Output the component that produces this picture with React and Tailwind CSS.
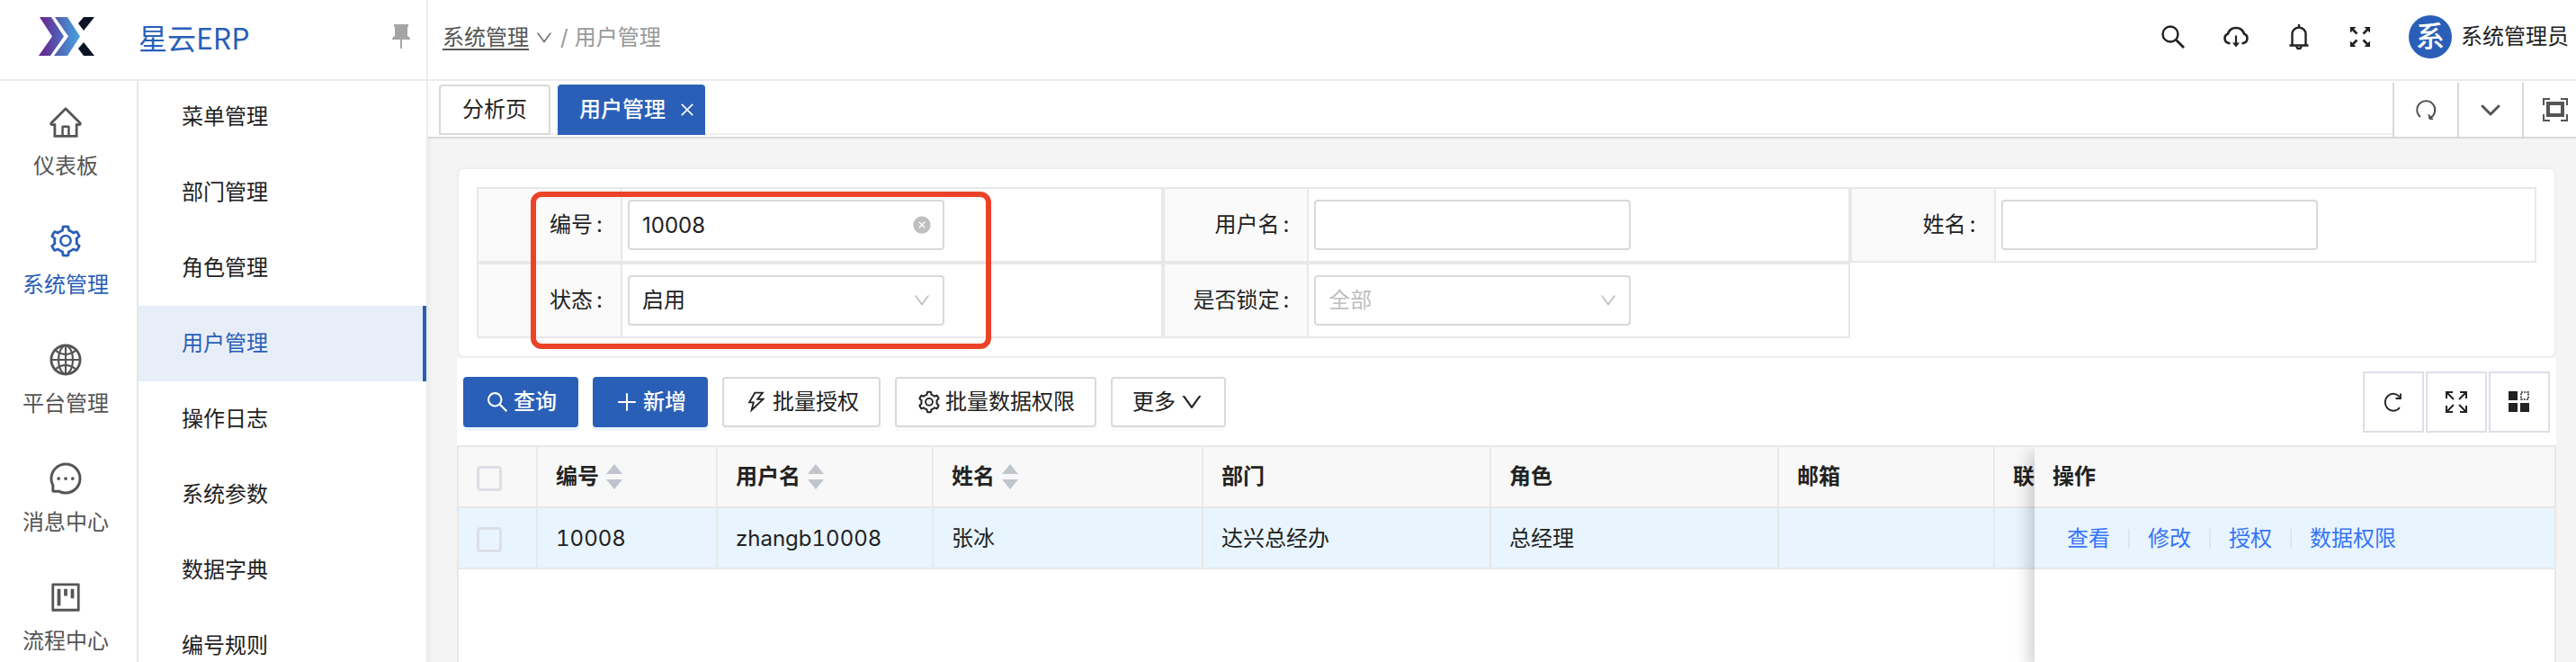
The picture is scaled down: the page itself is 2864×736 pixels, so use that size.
import React from "react";
import { useState } from "react";
import {
    AiOutlineHome, AiOutlineSetting, AiOutlineGlobal, AiOutlineMessage, AiOutlineProject,
    AiOutlineSearch, AiOutlinePlus, AiOutlineThunderbolt, AiOutlineDown, AiOutlineClose, AiFillCloseCircle,
} from "react-icons/ai";

const modules = [
    { name: "仪表板", icon: AiOutlineHome },
    { name: "系统管理", icon: AiOutlineSetting },
    { name: "平台管理", icon: AiOutlineGlobal },
    { name: "消息中心", icon: AiOutlineMessage },
    { name: "流程中心", icon: AiOutlineProject },
];

const menus = ["菜单管理", "部门管理", "角色管理", "用户管理", "操作日志", "系统参数", "数据字典", "编号规则"];

const columns = [
    { title: "编号", width: "w-[200px]", sortable: true },
    { title: "用户名", width: "w-[240px]", sortable: true },
    { title: "姓名", width: "w-[300px]", sortable: true },
    { title: "部门", width: "w-[320px]" },
    { title: "角色", width: "w-[320px]" },
    { title: "邮箱", width: "w-[240px]" },
    { title: "联", width: "w-[240px]" },
];

const rows = [
    { id: 1, cells: ["10008", "zhangb10008", "张冰", "达兴总经办", "总经理", "", ""] },
];

function Logo() {
    return (
        <svg width="64" height="46" viewBox="0 0 64 46">
            <defs>
                <linearGradient id="logoA" x1="0" y1="0" x2="1" y2="0">
                    <stop offset="0" stopColor="#6f1f8a" />
                    <stop offset="1" stopColor="#4a6cc0" />
                </linearGradient>
                <linearGradient id="logoB" x1="0" y1="0" x2="1" y2="0">
                    <stop offset="0" stopColor="#5457b0" />
                    <stop offset="1" stopColor="#46a4de" />
                </linearGradient>
            </defs>
            <path d="M2 1h13l14 21.500L14 44H1l15-21.500z" fill="url(#logoA)" />
            <path d="M19 1h14l14 21.500L33 44H18l16-21.500z" fill="url(#logoB)" />
            <path d="M51 1h12L51 16l-6-8zM51 29l12 15H51l-6-8z" fill="#0b1426" />
        </svg>
    );
}

function PinIcon() {
    return (
        <svg width="20" height="28" viewBox="0 0 20 28" fill="#a5a5a5">
            <path d="M2 0h16v3h-1v10c2 1 3 2 3 4H0c0-2 1-3 3-4V3H2zM9 17h2v10H9z" />
        </svg>
    );
}

function SearchIcon() {
    return (
        <svg width="28" height="28" viewBox="0 0 28 28" fill="none" stroke="currentColor" strokeWidth="2.4">
            <circle cx="11" cy="11" r="8.500" />
            <path d="M17 17l9 9" strokeWidth="2.8" />
        </svg>
    );
}

function CloudIcon() {
    return (
        <svg width="32" height="28" viewBox="0 0 32 28" fill="none" stroke="currentColor" strokeWidth="2.6">
            <path d="M9.500 21H8A5.500 5.500 0 0 1 7 10.500a9.500 9.500 0 0 1 18 0A5.500 5.500 0 0 1 24 21h-1.500" />
            <path d="M16 12.500V22" strokeWidth="2.2" />
            <path d="M12 20.500h8l-4 5z" fill="currentColor" stroke="none" />
        </svg>
    );
}

function BellIcon() {
    return (
        <svg width="28" height="32" viewBox="0 0 28 32" fill="none" stroke="currentColor" strokeWidth="2.4">
            <path d="M6.500 25.500V13a7.500 7.500 0 0 1 15 0v12.500M3.500 25.500h21M14 2v4" />
            <path d="M11.500 26.500a2.500 2.500 0 0 0 5 0" />
        </svg>
    );
}

function ExpandIcon() {
    return (
        <svg width="28" height="28" viewBox="0 0 28 28" fill="currentColor">
            <path d="M3 3h6.500L3 9.500zM25 3v6.500L18.500 3zM3 25v-6.500L9.500 25zM25 25h-6.500l6.500-6.500z" />
            <path d="M5 5l5.500 5.500M23 5l-5.500 5.500M5 23l5.500-5.500M23 23l-5.500-5.500" stroke="currentColor" strokeWidth="2.6" />
        </svg>
    );
}

function ReloadIcon() {
    return (
        <svg width="28" height="28" viewBox="0 0 28 28" fill="none" stroke="currentColor" strokeWidth="2">
            <path d="M8 22a10 10 0 1 1 11 1" />
            <path d="M17 19l1 5.500h4z" fill="currentColor" strokeWidth="1" />
        </svg>
    );
}

function ChevronIcon() {
    return (
        <svg width="24" height="24" viewBox="0 0 24 24" fill="none" stroke="currentColor" strokeWidth="3" strokeLinecap="round" strokeLinejoin="round">
            <path d="M3 8l9 9 9-9" />
        </svg>
    );
}

function FocusIcon() {
    return (
        <svg width="28" height="26" viewBox="0 0 28 26" fill="none" stroke="currentColor" strokeWidth="2">
            <path d="M1 8V1h7M20 1h7v7M27 18v7h-7M8 25H1v-7" />
            <rect x="6" y="6" width="16" height="13" strokeWidth="4" />
        </svg>
    );
}

function RefreshIcon() {
    return (
        <svg width="24" height="24" viewBox="0 0 24 24" fill="none" stroke="currentColor" strokeWidth="1.8">
            <path d="M19 18a9 9.500 0 1 1 0-11.500" />
            <path d="M20 2.500V8h-5.500" />
        </svg>
    );
}

function ZoomIcon() {
    return (
        <svg width="24" height="24" viewBox="0 0 24 24" fill="none" stroke="currentColor" strokeWidth="2">
            <path d="M1 8V1h7M1 1l8 8M16 1h7v7M23 1l-8 8M1 16v7h7M1 23l8-8M23 16v7h-7M23 23l-8-8" />
        </svg>
    );
}

function CustomIcon() {
    return (
        <svg width="24" height="24" viewBox="0 0 24 24" fill="currentColor">
            <path d="M0 0h10v10H0zM0 13h10v10H0zM13 13h10v10H13z" />
            <rect x="14" y="1" width="8" height="8" fill="none" stroke="currentColor" strokeWidth="1.6" strokeDasharray="2 1.200" />
        </svg>
    );
}

function SortIcon() {
    return (
        <svg width="18" height="28" viewBox="0 0 18 28" fill="#c0c4cc">
            <path d="M9 0l9 11H0zM9 28l9-11H0z" />
        </svg>
    );
}

function Field({ label, id, children }) {
    return (
        <div className="flex border-2 border-[#e8e8e8]">
            <label htmlFor={id} className="flex items-center justify-end w-[160px] pr-5 border-r-2 border-[#e8e8e8] bg-[#fafafa]">
                {label}<span className="ml-1">:</span>
            </label>
            <div className="relative flex-1 py-3 pl-[6px]">
                <div className="relative w-[352px]">{children}</div>
            </div>
        </div>
    );
}

const control = "block w-full h-14 px-[14px] border-2 border-[#d9d9d9] rounded bg-white appearance-none outline-none";

function ToolButton({ primary, children }) {
    return (
        <button
            className={`flex items-center gap-1 h-14 px-[22px] border-2 rounded whitespace-nowrap ${primary
                ? "bg-[#2a5fb8] border-[#2a5fb8] text-white font-medium shadow-[0_4px_0_#eaf4ff]"
                : "bg-white border-[#d9d9d9] shadow-[0_4px_0_#fafafa]"}`}
        >
            {children}
        </button>
    );
}

function App() {
    const [code, setCode] = useState("10008");
    const [status, setStatus] = useState("启用");
    const [activeMenu, setActiveMenu] = useState("用户管理");

    return (
        <div className="flex flex-col h-screen overflow-hidden bg-white text-2xl leading-9 text-[#222] font-['Inter','Noto_Sans_CJK_SC',sans-serif]">
            {/* header */}
            <header className="relative z-20 flex h-[88px] shrink-0 bg-white shadow-[0_2px_0_#ececec]">
                <div className="flex items-center justify-between w-[476px] pl-[42px] pr-[18px] pb-[6px] border-r-2 border-[#ececec]">
                    <div className="flex items-center gap-12">
                        <Logo />
                        <h1 className="text-[32px] leading-10 text-[#2a5fb8] font-['Noto_Sans_CJK_SC',sans-serif]">星云ERP</h1>
                    </div>
                    <button aria-label="固定"><PinIcon /></button>
                </div>
                <nav className="flex items-center flex-1 pl-4 pb-1 text-[#999]">
                    <a href="#system" className="text-[#555] underline underline-offset-4">系统管理</a>
                    <AiOutlineDown size={22} className="ml-[6px] text-[#777]" />
                    <span className="mx-[7px]">/</span>
                    <span>用户管理</span>
                </nav>
                <div className="flex items-center gap-10 pr-2 pb-[6px]">
                    <button aria-label="搜索"><SearchIcon /></button>
                    <button aria-label="下载"><CloudIcon /></button>
                    <button aria-label="通知"><BellIcon /></button>
                    <button aria-label="全屏"><ExpandIcon /></button>
                    <div className="flex items-center gap-[10px]">
                        <span className="flex items-center justify-center w-12 h-12 rounded-full bg-[#2a5fb8] text-white text-[32px] font-medium">系</span>
                        <span>系统管理员</span>
                    </div>
                </div>
            </header>

            <div className="flex flex-1 min-h-0">
                {/* module bar */}
                <nav className="w-[154px] shrink-0 pr-[6px] border-r-2 border-[#e8e8e8] text-[#555]">
                    {modules.map(({ name, icon: Icon }) => (
                        <a key={name} href="#module" className={`flex flex-col items-center gap-[11px] h-[132px] pt-7 ${name === "系统管理" ? "text-[#2a5fb8]" : ""}`}>
                            <Icon size={40} />
                            <span>{name}</span>
                        </a>
                    ))}
                </nav>

                {/* sub menu */}
                <nav className="relative z-10 w-[322px] shrink-0 bg-white border-r-2 border-[#ececec] shadow-[2px_0_8px_rgba(0,0,0,0.03)]">
                    {menus.map((menu) => (
                        <a
                            key={menu}
                            href="#menu"
                            onClick={() => setActiveMenu(menu)}
                            className={`flex items-center h-[84px] pl-12 ${menu === activeMenu ? "bg-[#e8eef8] text-[#2a5fb8] border-r-4 border-[#2a5fb8]" : ""}`}
                        >
                            {menu}
                        </a>
                    ))}
                </nav>

                <main className="flex flex-col flex-1 min-w-0 bg-[#f4f4f4]">
                    {/* tabs */}
                    <div className="flex h-[66px] shrink-0 pt-1 bg-white border-b-2 border-[#d9d9d9] overflow-hidden">
                        <div className="flex items-end flex-1 pl-3 pb-[2px]">
                            <div className="flex items-end flex-1 gap-2 border-b-2 border-[#f0f0f0]">
                                <button className="-mb-[2px] h-14 px-6 border-2 border-[#d9d9d9] rounded-t bg-white">分析页</button>
                                <div className="flex items-center gap-[14px] -mb-[2px] h-14 pl-6 pr-[10px] rounded-t bg-[#2a5fb8] text-white">
                                    <button className="font-medium">用户管理</button>
                                    <button aria-label="关闭"><AiOutlineClose size={20} /></button>
                                </div>
                            </div>
                        </div>
                        <div className="flex -mr-3 text-[#555]">
                            <button aria-label="刷新" className="flex items-center justify-center w-[72px] border-l-2 border-[#d9d9d9]"><ReloadIcon /></button>
                            <button aria-label="展开" className="flex items-center justify-center w-[72px] border-l-2 border-[#d9d9d9]"><ChevronIcon /></button>
                            <button aria-label="聚焦" className="flex items-center justify-center w-[72px] border-l-2 border-[#d9d9d9]"><FocusIcon /></button>
                        </div>
                    </div>

                    <div className="flex flex-col flex-1 min-h-0 pt-8 pl-8 pr-[22px]">
                        {/* search form */}
                        <form className="p-5 bg-white border-2 border-[#eee] rounded-lg">
                            <div className="relative grid grid-cols-3">
                                <Field label="编号" id="code">
                                    <input id="code" value={code} onChange={(e) => setCode(e.target.value)} className={control} />
                                    <button type="button" aria-label="清空" onClick={() => setCode("")} className="absolute right-[14px] top-[17px] text-[#bfbfbf]">
                                        <AiFillCloseCircle size={22} />
                                    </button>
                                </Field>
                                <Field label="用户名" id="username"><input id="username" className={control} /></Field>
                                <Field label="姓名" id="realname"><input id="realname" className={control} /></Field>
                                <Field label="状态" id="status">
                                    <select id="status" value={status} onChange={(e) => setStatus(e.target.value)} className={control}>
                                        <option>启用</option>
                                    </select>
                                    <AiOutlineDown size={22} className="absolute right-[14px] top-[17px] text-[#bfbfbf] pointer-events-none" />
                                </Field>
                                <Field label="是否锁定" id="locked">
                                    <select id="locked" className={`${control} text-[#bfbfbf]`}>
                                        <option>全部</option>
                                    </select>
                                    <AiOutlineDown size={22} className="absolute right-[14px] top-[17px] text-[#bfbfbf] pointer-events-none" />
                                </Field>
                                <div className="absolute left-[60px] top-[5px] w-[512px] h-[175px] border-[6px] border-[#ec4328] rounded-xl pointer-events-none" />
                            </div>
                        </form>

                        {/* toolbar */}
                        <div className="flex items-center justify-between h-[97px] shrink-0 px-[7px] bg-white">
                            <div className="flex gap-4">
                                <ToolButton primary><AiOutlineSearch size={28} />查询</ToolButton>
                                <ToolButton primary><AiOutlinePlus size={28} />新增</ToolButton>
                                <ToolButton><AiOutlineThunderbolt size={28} />批量授权</ToolButton>
                                <ToolButton><AiOutlineSetting size={28} />批量数据权限</ToolButton>
                                <ToolButton>更多<AiOutlineDown size={28} /></ToolButton>
                            </div>
                            <div className="flex gap-[2px]">
                                <button aria-label="刷新" className="flex items-center justify-center w-[68px] h-[68px] border-2 border-[#dcdfe6]"><RefreshIcon /></button>
                                <button aria-label="最大化" className="flex items-center justify-center w-[68px] h-[68px] border-2 border-[#dcdfe6]"><ZoomIcon /></button>
                                <button aria-label="列设置" className="flex items-center justify-center w-[68px] h-[68px] border-2 border-[#dcdfe6]"><CustomIcon /></button>
                            </div>
                        </div>

                        {/* table, action column is fixed on the right */}
                        <div className="flex flex-1 overflow-hidden bg-white border-2 border-b-0 border-[#e8e8e8]">
                            <div className="flex-1 overflow-hidden">
                                <table className="w-full table-fixed text-left tabular-nums border-separate border-spacing-0">
                                    <thead>
                                        <tr className="h-[68px] bg-[#f8f8f8]">
                                            <th className="w-[88px] pl-5 pt-1 border-b-2 border-r-2 border-[#e8e8e8]">
                                                <input type="checkbox" aria-label="全选" className="block w-7 h-7 border-[3px] border-[#dcdfe6] rounded appearance-none" />
                                            </th>
                                            {columns.map((col) => (
                                                <th key={col.title} className={`${col.width} pl-5 font-bold border-b-2 border-r-2 border-[#e8e8e8] whitespace-nowrap`}>
                                                    <div className="flex items-center gap-2">{col.title}{col.sortable && <SortIcon />}</div>
                                                </th>
                                            ))}
                                        </tr>
                                    </thead>
                                    <tbody>
                                        {rows.map((row) => (
                                            <tr key={row.id} className="h-[68px] bg-[#e8f5fe]">
                                                <td className="pl-5 pt-1 border-b-2 border-r-2 border-[#e8e8e8]">
                                                    <input type="checkbox" aria-label="选择" className="block w-7 h-7 border-[3px] border-[#dcdfe6] rounded appearance-none" />
                                                </td>
                                                {row.cells.map((cell, index) => (
                                                    <td key={index} className="pl-5 pt-[2px] border-b-2 border-r-2 border-[#e8e8e8] whitespace-nowrap">{cell}</td>
                                                ))}
                                            </tr>
                                        ))}
                                    </tbody>
                                </table>
                            </div>
                            <div className="relative w-[578px] shrink-0 bg-white shadow-[-4px_6px_18px_rgba(0,0,0,0.22)]">
                                <table className="w-full text-left border-separate border-spacing-0">
                                    <thead>
                                        <tr className="h-[68px] bg-[#f8f8f8]">
                                            <th className="pl-5 font-bold border-b-2 border-[#e8e8e8]">操作</th>
                                        </tr>
                                    </thead>
                                    <tbody>
                                        <tr className="h-[68px] bg-[#e8f5fe]">
                                            <td className="pl-9 pt-[2px] border-b-2 border-[#e8e8e8]">
                                                <div className="flex items-center gap-5 text-[#3574f8]">
                                                    <a href="#view">查看</a>
                                                    <span className="w-[2px] h-[22px] bg-[#dbe6ee]" />
                                                    <a href="#edit">修改</a>
                                                    <span className="w-[2px] h-[22px] bg-[#dbe6ee]" />
                                                    <a href="#grant">授权</a>
                                                    <span className="w-[2px] h-[22px] bg-[#dbe6ee]" />
                                                    <a href="#data">数据权限</a>
                                                </div>
                                            </td>
                                        </tr>
                                    </tbody>
                                </table>
                            </div>
                        </div>
                    </div>
                </main>
            </div>
        </div>
    );
}

export default App;
